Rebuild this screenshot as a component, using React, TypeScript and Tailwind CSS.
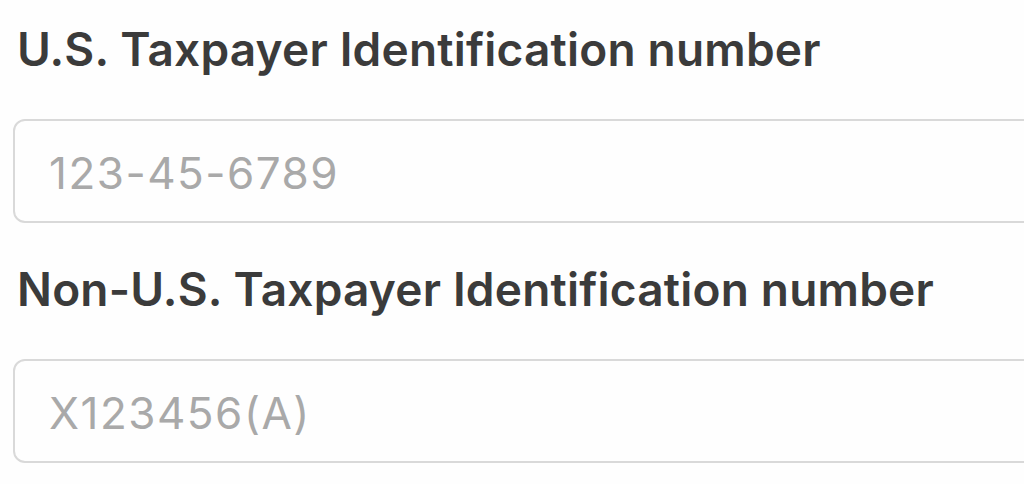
import React from 'react';

type FieldProps = {
  label: string;
  placeholder: string;
};

const TaxField = ({ label, placeholder }: FieldProps) => {
  return (
    <div className="flex flex-col">
      {/* Label */}
      <label className="pl-[17px] text-[46px] leading-[56px] font-semibold text-[#3b3b3b] tracking-[0.2px]">
        {label}
      </label>
      {/* Input */}
      <input
        type="text"
        placeholder={placeholder}
        className="mt-[42px] ml-[13px] h-[104px] w-[1060px] rounded-[12px] border-2 border-[#d9d9d9] bg-[#fefefe] px-[34px] pt-[4px] text-[44px] tracking-[1.5px] text-[#333] placeholder:text-[#a9a9a9] outline-none"
      />
    </div>
  );
};

export default function App() {
  return (
    <div
      className="h-[484px] w-[1024px] overflow-hidden bg-[#fefefe] pt-[21px]"
      style={{ fontFamily: 'Inter, "Noto Sans", sans-serif' }}
    >
      <div className="flex flex-col gap-[38px]">
        <TaxField label="U.S. Taxpayer Identification number" placeholder="123-45-6789" />
        <TaxField label="Non-U.S. Taxpayer Identification number" placeholder="X123456(A)" />
      </div>
    </div>
  );
}
